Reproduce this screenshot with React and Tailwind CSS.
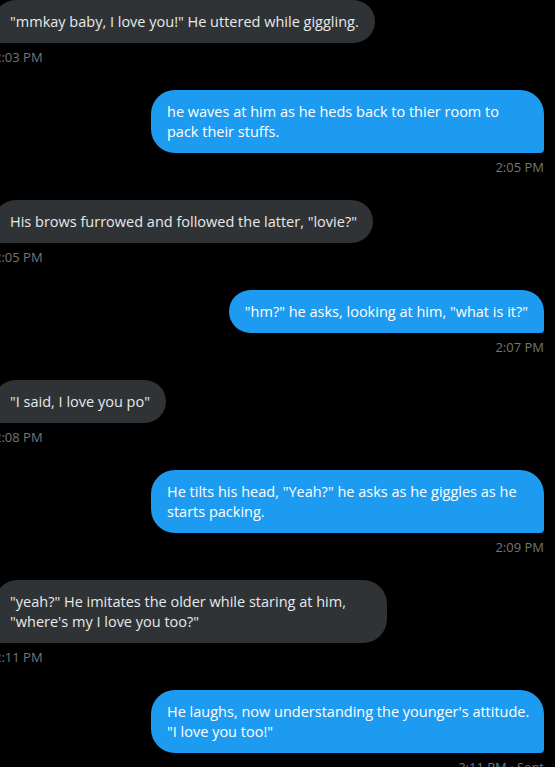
import React from 'react';

const MESSAGES = [
  { id: 1, side: 'left', lines: ['"mmkay baby, I love you!" He uttered while giggling.'], time: '2:03 PM' },
  { id: 2, side: 'right', lines: ['he waves at him as he heds back to thier room to', 'pack their stuffs.'], time: '2:05 PM' },
  { id: 3, side: 'left', lines: ['His brows furrowed and followed the latter, "lovie?"'], time: '2:05 PM' },
  { id: 4, side: 'right', lines: ['"hm?" he asks, looking at him, "what is it?"'], time: '2:07 PM' },
  { id: 5, side: 'left', lines: ['"I said, I love you po"'], time: '2:08 PM' },
  { id: 6, side: 'right', lines: ['He tilts his head, "Yeah?" he asks as he giggles as he', 'starts packing.'], time: '2:09 PM' },
  { id: 7, side: 'left', lines: ['"yeah?" He imitates the older while staring at him,', '"where\'s my I love you too?"'], time: '2:11 PM' },
  { id: 8, side: 'right', lines: ['He laughs, now understanding the younger\'s attitude.', '"I love you too!"'], time: '2:11 PM · Sent' },
];

function Bubble({ side, lines }) {
  const multi = lines.length > 1;
  const shape =
    side === 'left'
      ? 'rounded-[24px] rounded-bl-[4px] bg-[#2f3336] text-[#e7e9ea]'
      : 'rounded-[24px] rounded-br-[4px] bg-[#1d9bf0] text-white';
  return (
    <div
      className={`${shape} ${multi ? 'w-[393px]' : 'w-fit'} px-4 pt-3 pb-[11px] text-[14.5px] leading-[20px] whitespace-nowrap`}
    >
      {lines.map((line, i) => (
        <div key={i}>{line}</div>
      ))}
    </div>
  );
}

export default function App() {
  return (
    <div
      className="min-h-screen overflow-hidden bg-black pr-[11px]"
      style={{ fontFamily: '"Open Sans", "Noto Sans", sans-serif' }}
    >
      <div className="flex flex-col">
        {MESSAGES.map((m) => (
          <div
            key={m.id}
            className={`mb-[25px] flex flex-col ${m.side === 'left' ? '-ml-[6px] items-start' : 'items-end'}`}
          >
            <Bubble side={m.side} lines={m.lines} />
            <div className="mt-[6px] h-4 text-[13px] leading-4 text-[#71767b]">{m.time}</div>
          </div>
        ))}
      </div>
    </div>
  );
}
